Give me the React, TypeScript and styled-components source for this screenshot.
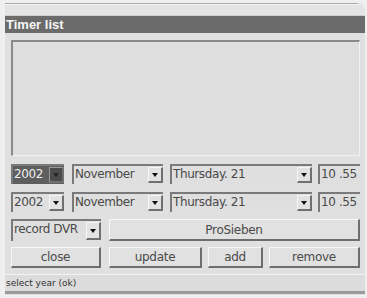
import React from "react";
import styled, { createGlobalStyle } from "styled-components";

const Global = createGlobalStyle`
  html, body { margin: 0; padding: 0; background: #efefef; }
  body { font-family: "DejaVu Sans", "Liberation Sans", sans-serif; }
`;

const Frame = styled.div`
  margin: 3px 2px 0 5px;
  width: 360px;
  height: 292px;
  background: #e0e0e0;
  border-top: 1px solid #a8a8a8;
  border-top-right-radius: 9px;
  box-sizing: border-box;
  display: flex;
  flex-direction: column;
`;

const TopBand = styled.div`
  height: 10px;
  border-top: 1px solid #f4f4f4;
  border-bottom: 1px solid #cfcfcf;
  border-top-right-radius: 8px;
  background: #e4e4e4;
`;

const TitleBar = styled.div`
  height: 17px;
  background: #6b6b6b;
  color: #f6f6f6;
  font-family: "Liberation Sans", "DejaVu Sans", sans-serif;
  font-weight: bold;
  font-size: 13px;
  line-height: 17px;
  padding-left: 1px;
`;

const Body = styled.div`
  padding: 7px 5px 0 6px;
  display: flex;
  flex-direction: column;
`;

const ListBox = styled.div`
  height: 116px;
  background: #dedede;
  border-top: 2px solid #8a8a8a;
  border-left: 2px solid #8a8a8a;
  border-right: 1px solid #f2f2f2;
  border-bottom: 1px solid #f2f2f2;
  box-sizing: border-box;
`;

const Row = styled.div<{ $mt: number; $h: number }>`
  display: flex;
  margin-top: ${(p) => p.$mt}px;
  height: ${(p) => p.$h}px;
`;

const Combo = styled.div<{ $w: number; $sel?: boolean; $ml?: number }>`
  width: ${(p) => p.$w}px;
  margin-left: ${(p) => p.$ml ?? 0}px;
  display: flex;
  box-sizing: border-box;
  border-top: 2px solid #7a7a7a;
  border-left: 2px solid #7a7a7a;
  background: ${(p) => (p.$sel ? "#5e5e5e" : "#dfdfdf")};
  color: ${(p) => (p.$sel ? "#ededed" : "#4a4a4a")};
`;

const ComboText = styled.div`
  flex: 1;
  font-size: 12px;
  line-height: 17px;
  padding-left: 1px;
  white-space: nowrap;
  overflow: hidden;
  letter-spacing: -0.4px;
`;

const Arrow = styled.div<{ $sel?: boolean }>`
  width: 15px;
  box-sizing: border-box;
  margin: 1px 0;
  background: ${(p) => (p.$sel ? "#4c4c4c" : "#e2e2e2")};
  border-top: 1px solid ${(p) => (p.$sel ? "#9a9a9a" : "#f6f6f6")};
  border-left: 1px solid ${(p) => (p.$sel ? "#9a9a9a" : "#f6f6f6")};
  border-right: 2px solid #707070;
  border-bottom: 2px solid #707070;
  display: flex;
  align-items: center;
  justify-content: center;
  &::after {
    content: "";
    border-left: 3px solid transparent;
    border-right: 3px solid transparent;
    border-top: 4px solid ${(p) => (p.$sel ? "#222" : "#111")};
  }
`;

const TimeField = styled.div<{ $ml: number }>`
  margin-left: ${(p) => p.$ml}px;
  width: 42px;
  box-sizing: border-box;
  border-top: 2px solid #7a7a7a;
  border-left: 2px solid #7a7a7a;
  background: #dfdfdf;
  color: #4a4a4a;
  font-size: 12px;
  line-height: 17px;
  padding-left: 1px;
  letter-spacing: -0.4px;
  white-space: pre;
`;

const Button = styled.div<{ $w?: number; $ml?: number; $grow?: boolean }>`
  ${(p) => (p.$grow ? "flex: 1;" : `width: ${p.$w}px;`)}
  margin-left: ${(p) => p.$ml ?? 0}px;
  box-sizing: border-box;
  background: #e1e1e1;
  border-top: 1px solid #f7f7f7;
  border-left: 1px solid #f7f7f7;
  border-right: 2px solid #6e6e6e;
  border-bottom: 2px solid #6e6e6e;
  color: #4a4a4a;
  font-size: 12px;
  display: flex;
  align-items: center;
  justify-content: center;
  letter-spacing: -0.3px;
`;

const StatusBar = styled.div`
  margin-top: 6px;
  height: 20px;
  box-sizing: border-box;
  border-top: 1px solid #f2f2f2;
  border-bottom: 3px solid #9a9a9a;
  background: #dcdcdc;
  color: #333;
  font-size: 9px;
  line-height: 16px;
  padding-left: 1px;
`;

export default function App() {
  return (
    <>
      <Global />
      <Frame>
        <TopBand />
        <TitleBar>Timer list</TitleBar>
        <Body>
          <ListBox />
          <Row $mt={8} $h={20}>
            <Combo $w={53} $sel>
              <ComboText>2002</ComboText>
              <Arrow $sel />
            </Combo>
            <Combo $w={91} $ml={8}>
              <ComboText>November</ComboText>
              <Arrow />
            </Combo>
            <Combo $w={142} $ml={7}>
              <ComboText>Thursday. 21</ComboText>
              <Arrow />
            </Combo>
            <TimeField $ml={6}>10 .55</TimeField>
          </Row>
          <Row $mt={8} $h={20}>
            <Combo $w={53}>
              <ComboText>2002</ComboText>
              <Arrow />
            </Combo>
            <Combo $w={91} $ml={8}>
              <ComboText>November</ComboText>
              <Arrow />
            </Combo>
            <Combo $w={142} $ml={7}>
              <ComboText>Thursday. 21</ComboText>
              <Arrow />
            </Combo>
            <TimeField $ml={6}>10 .55</TimeField>
          </Row>
          <Row $mt={7} $h={22}>
            <Combo $w={90}>
              <ComboText>record DVR</ComboText>
              <Arrow />
            </Combo>
            <Button $grow $ml={8}>ProSieben</Button>
          </Row>
          <Row $mt={6} $h={21}>
            <Button $w={90}>close</Button>
            <Button $w={93} $ml={8}>update</Button>
            <Button $w={55} $ml={6}>add</Button>
            <Button $grow $ml={6}>remove</Button>
          </Row>
        </Body>
        <StatusBar>select year (ok)</StatusBar>
      </Frame>
    </>
  );
}
